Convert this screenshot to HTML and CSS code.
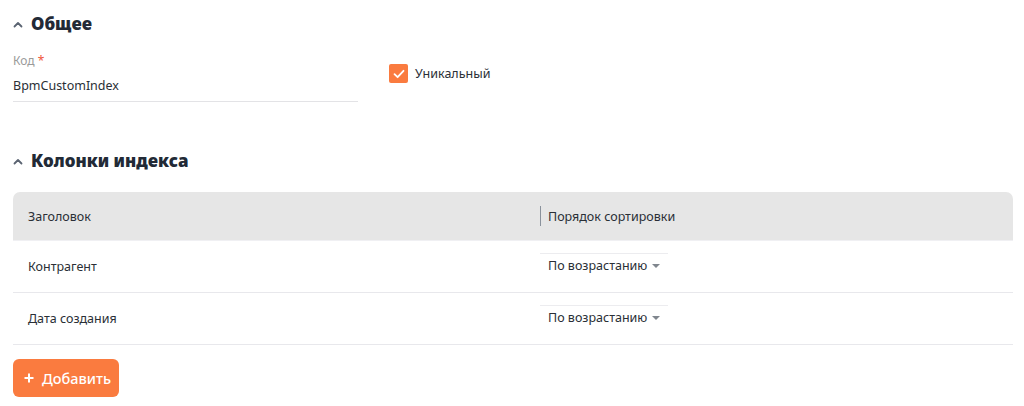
FILE: index.html
```html
<!DOCTYPE html>
<html lang="ru">
<head>
<meta charset="utf-8">
<link rel="stylesheet" href="styles.css">
</head>
<body>
<div class="page">
  <section class="section">
    <h2 class="section-title">
      <svg class="chev" width="10" height="7" viewBox="0 0 10 7"><path d="M1.5 5.5 L5 2 L8.5 5.5" fill="none" stroke="#5b6472" stroke-width="1.8" stroke-linecap="round" stroke-linejoin="round"/></svg>
      Общее
    </h2>
    <div class="general">
      <div class="field">
        <div class="label">Код <span class="req">*</span></div>
        <div class="value">BpmCustomIndex</div>
      </div>
      <label class="check">
        <span class="box"><svg width="14" height="14" viewBox="0 0 14 14"><path d="M2.5 7.2 L5.6 10.2 L11.5 3.8" fill="none" stroke="#fff" stroke-width="1.8" stroke-linecap="round" stroke-linejoin="round"/></svg></span>
        <span class="check-text">Уникальный</span>
      </label>
    </div>
  </section>

  <section class="section second">
    <h2 class="section-title">
      <svg class="chev" width="10" height="7" viewBox="0 0 10 7"><path d="M1.5 5.5 L5 2 L8.5 5.5" fill="none" stroke="#5b6472" stroke-width="1.8" stroke-linecap="round" stroke-linejoin="round"/></svg>
      Колонки индекса
    </h2>
    <div class="table">
      <div class="row head">
        <div class="cell c1">Заголовок</div>
        <div class="cell c2"><span class="divider"></span>Порядок сортировки</div>
      </div>
      <div class="row">
        <div class="cell c1">Контрагент</div>
        <div class="cell c2"><span class="select">По возрастанию <span class="caret"></span></span></div>
      </div>
      <div class="row">
        <div class="cell c1">Дата создания</div>
        <div class="cell c2"><span class="select">По возрастанию <span class="caret"></span></span></div>
      </div>
    </div>
    <button class="add"><svg class="plus" width="10" height="10" viewBox="0 0 10 10"><path d="M5 0.5 V9.5 M0.5 5 H9.5" stroke="#fff" stroke-width="2"/></svg>Добавить</button>
  </section>
</div>
</body>
</html>
```

FILE: styles.css
```css
* { box-sizing: border-box; }
html, body { margin: 0; padding: 0; background: #fff; }
body {
  font-family: "Noto Sans", "Open Sans", sans-serif;
  color: #2a2f36;
  font-size: 12.5px;
}
.page { padding: 12px 11px 0 13px; }
.section-title {
  margin: 0;
  display: flex;
  align-items: center;
  gap: 8px;
  font-size: 17px;
  font-weight: 900;
  color: #222a36;
  height: 24px;
  line-height: 24px;
}
.chev { margin-top: 1px; }
.general {
  display: flex;
  align-items: flex-start;
  margin-top: 17px;
}
.field { width: 345px; border-bottom: 1px solid #e3e3e6; padding-bottom: 6px; }
.label { font-size: 12px; color: #9a9a9a; line-height: 16px; }
.req { color: #f0563a; }
.value { margin-top: 8px; font-size: 12.5px; color: #2a2f36; line-height: 18px; }
.check {
  margin-left: 31px;
  margin-top: 11px;
  display: flex;
  align-items: center;
  gap: 7px;
}
.box {
  width: 19px; height: 19px;
  background: #fa7b3f;
  border-radius: 2px;
  display: flex; align-items: center; justify-content: center;
}
.check-text { font-size: 12.5px; color: #2a2f36; }
.second { margin-top: 47px; }
.table { margin-top: 19px; }
.row {
  display: flex;
  height: 52px;
  align-items: center;
  border-bottom: 1px solid #e8e8ec;
}
.row.head {
  background: #e6e6e6;
  border-radius: 7px 7px 0 0;
  height: 49px;
  border-bottom: 1px solid #f0f0f3;
}
.cell { font-size: 12.5px; color: #2a2f36; }
.c1 { width: 527px; padding-left: 15px; }
.c2 { display: flex; align-items: center; }
.divider { width: 1px; height: 20px; background: #8a929c; margin-right: 7px; }
.select {
  display: inline-flex;
  align-items: center;
  gap: 5px;
  border-top: 1px solid #ececef;
  padding: 3px 8px 0 8px;
  margin-top: -6px;
}
.caret {
  width: 0; height: 0;
  border-left: 4px solid transparent;
  border-right: 4px solid transparent;
  border-top: 4px solid #80868e;
}
.add {
  margin-top: 14px;
  display: flex; align-items: center; gap: 8px;
  height: 38px;
  width: 106px;
  padding: 0 0 0 11px;
  background: #fa7b3f;
  color: #fff;
  border: none;
  border-radius: 6px;
  font-family: "Noto Sans", "Open Sans", sans-serif;
  font-size: 14.5px;
  font-weight: 500;
}
.plus { flex: none; }
```
